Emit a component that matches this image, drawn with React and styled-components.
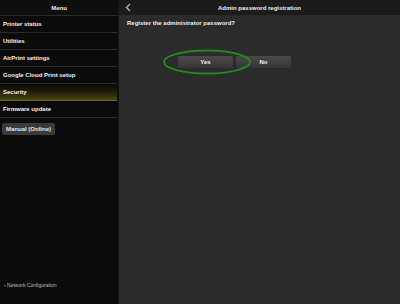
import styled, { createGlobalStyle } from "styled-components"

const GlobalStyle = createGlobalStyle`
    html, body {
        margin: 0;
        padding: 0;
        background: #0b0b0b;
    }
    body {
        font-family: "Liberation Sans", Arial, sans-serif;
    }
`

const Screen = styled.div`
    display: flex;
    width: 400px;
    height: 304px;
    overflow: hidden;
`

const Sidebar = styled.div`
    display: flex;
    flex-direction: column;
    width: 118px;
    background-color: #0b0b0b;
    border-right: 1px solid #151515;
`

const Main = styled.div`
    display: flex;
    flex-direction: column;
    flex: 1;
    background-color: #2b2b2b;
`

const Header = styled.div`
    display: flex;
    align-items: center;
    justify-content: center;
    position: relative;
    height: 16px;
    box-sizing: border-box;
    background-color: ${props => props.$main ? '#1b1b1b' : '#0e0e0e'};
    border-bottom: 1px solid #2a2a2a;
    color: #f0f0f0;
    font-size: 6px;
    font-weight: bold;
`

const BackButton = styled.span`
    position: absolute;
    left: 6px;
    top: 3px;
    display: flex;
`

const MenuItem = styled.div`
    display: flex;
    align-items: center;
    height: 17px;
    box-sizing: border-box;
    padding-left: 3px;
    margin-right: 1px;
    color: #f2f2f2;
    font-size: 6px;
    font-weight: bold;
    border-bottom: 1px solid ${props => props.$active ? '#6a6420' : '#2a2a2a'};
    background: ${props => props.$active
        ? 'linear-gradient(to bottom, #0b0b0b 0%, #1a1805 40%, #4a4512 100%)'
        : 'transparent'};
`

const ManualButton = styled.div`
    align-self: flex-start;
    margin: 5px 0 0 2px;
    padding: 3px 4px;
    background-color: #3a3a3a;
    border-radius: 2px;
    color: #e4e4e4;
    font-size: 6px;
    font-weight: bold;
`

const Spacer = styled.div`
    flex: 1;
`

const FooterLink = styled.div`
    padding: 0 0 16px 4px;
    color: #bdbdbd;
    font-size: 5px;
`

const Body = styled.div`
    display: flex;
    flex-direction: column;
    padding: 4px 8px;
`

const Question = styled.div`
    color: #f0f0f0;
    font-size: 6px;
    font-weight: bold;
`

const ButtonRow = styled.div`
    display: flex;
    gap: 3px;
    margin: 30px 0 0 51px;
    position: relative;
`

const ChoiceButton = styled.div`
    display: flex;
    align-items: center;
    justify-content: center;
    width: 55px;
    height: 12px;
    background: linear-gradient(to bottom, #4a4a4a, #363636);
    border-radius: 2px;
    color: #f4f4f4;
    font-size: 6px;
    font-weight: bold;
`

const Highlight = styled.svg`
    position: absolute;
    left: -16px;
    top: -7px;
    pointer-events: none;
`

const App = () => {
    return (
        <>
            <GlobalStyle />
            <Screen>
                <Sidebar>
                    <Header>Menu</Header>
                    <MenuItem>Printer status</MenuItem>
                    <MenuItem>Utilities</MenuItem>
                    <MenuItem>AirPrint settings</MenuItem>
                    <MenuItem>Google Cloud Print setup</MenuItem>
                    <MenuItem $active>Security</MenuItem>
                    <MenuItem>Firmware update</MenuItem>
                    <ManualButton>Manual (Online)</ManualButton>
                    <Spacer />
                    <FooterLink>› Network Configuration</FooterLink>
                </Sidebar>
                <Main>
                    <Header $main>
                        <BackButton>
                            <svg width="6" height="9" viewBox="0 0 6 9">
                                <path d="M5 1 L1.5 4.5 L5 8" fill="none" stroke="#b0b0b0" strokeWidth="1.4" />
                            </svg>
                        </BackButton>
                        Admin password registration
                    </Header>
                    <Body>
                        <Question>Register the administrator password?</Question>
                        <ButtonRow>
                            <ChoiceButton>Yes</ChoiceButton>
                            <ChoiceButton>No</ChoiceButton>
                            <Highlight width="90" height="26" viewBox="0 0 90 26">
                                <ellipse cx="45" cy="13" rx="43" ry="11.5" fill="none" stroke="#1f8a1f" strokeWidth="1.8" />
                            </Highlight>
                        </ButtonRow>
                    </Body>
                </Main>
            </Screen>
        </>
    )
}

export default App
